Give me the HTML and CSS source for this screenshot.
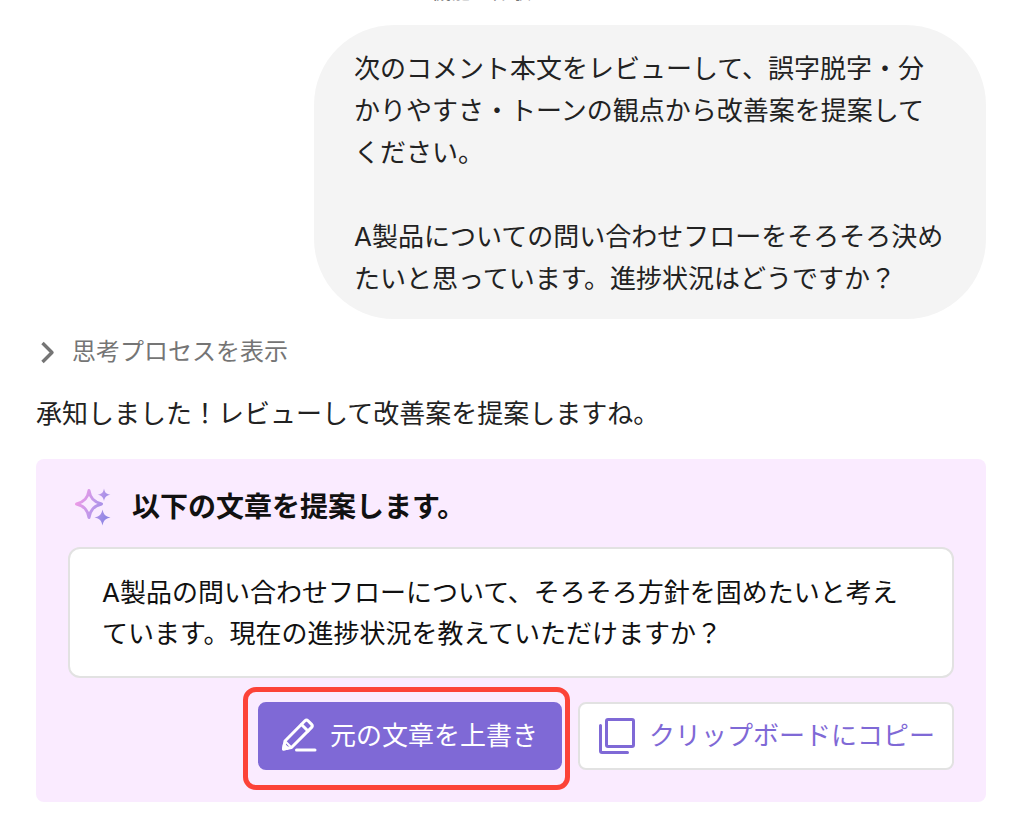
FILE: index.html
```html
<!DOCTYPE html>
<html lang="ja">
<head>
<meta charset="utf-8">
<meta name="viewport" content="width=device-width, initial-scale=1">
<title>レビュー</title>
<link rel="stylesheet" href="styles.css">
</head>
<body>
<main class="chat">
  <p class="notice">し機能を体験できます</p>

  <section class="message message-user">
    <p>次のコメント本文をレビューして、誤字脱字・分かりやすさ・トーンの観点から改善案を提案してください。</p>
    <p>A製品についての問い合わせフローをそろそろ決めたいと思っています。進捗状況はどうですか？</p>
  </section>

  <button class="thinking" type="button" aria-expanded="false">
    <svg class="thinking-icon" viewBox="0 0 24 24" aria-hidden="true"><path d="M6.500 3l9.500 9.500-9.500 9.500" fill="none" stroke="currentColor" stroke-width="3.400" stroke-linejoin="round"/></svg>
    思考プロセスを表示
  </button>

  <p class="reply">承知しました！レビューして改善案を提案しますね。</p>

  <section class="proposal">
    <h2 class="proposal-title">
      <svg class="sparkle" viewBox="0 0 40 40" aria-hidden="true">
        <defs>
          <linearGradient id="sparkle-fill" gradientUnits="userSpaceOnUse" x1="2" y1="14" x2="36" y2="28">
            <stop offset="0" stop-color="#f39be6"/>
            <stop offset=".55" stop-color="#bd98ea"/>
            <stop offset="1" stop-color="#8f86e4"/>
          </linearGradient>
        </defs>
        <path fill="none" stroke="url(#sparkle-fill)" stroke-width="3" stroke-linejoin="round" d="M17 3.500c1.200 7.600 4.600 11.500 12.500 13.500-7.900 2-11.300 5.900-12.500 13.500-1.200-7.600-4.600-11.500-12.500-13.500 7.900-2 11.300-5.900 12.500-13.500z"/>
        <path fill="url(#sparkle-fill)" d="M32 1.500c.9 4.300 2.200 5.400 6.500 6.300-4.300.9-5.600 2-6.500 6.300-.9-4.300-2.200-5.400-6.500-6.300 4.300-.9 5.600-2 6.500-6.300z"/>
        <path fill="url(#sparkle-fill)" d="M30.500 22.500c1.200 5.300 2.700 6.800 8 8-5.300 1.200-6.800 2.700-8 8-1.200-5.300-2.700-6.800-8-8 5.300-1.200 6.800-2.700 8-8z"/>
      </svg>
      以下の文章を提案します。
    </h2>
    <p class="proposal-text">A製品の問い合わせフローについて、そろそろ方針を固めたいと考えています。現在の進捗状況を教えていただけますか？</p>
    <div class="actions">
      <div class="highlighted">
        <button class="button button-primary" type="button">
          <svg class="button-icon" viewBox="0 0 40 40" fill="none" stroke="currentColor" stroke-width="3" stroke-linecap="round" stroke-linejoin="round" aria-hidden="true">
            <path d="M5.500 33l1.500-8L27 4.800q1.500-1.500 3 0l3.600 3.600q1.500 1.500 0 3L13.500 31.500z"/>
            <path d="M23.500 8.500l6.500 6.500"/>
            <path d="M7.500 25.500l5.500 5.500" stroke-width="2"/>
            <path d="M18.500 34h18.500"/>
            <path d="M5.500 33l.7-4 3.300 3.300z" fill="currentColor"/>
          </svg>
          元の文章を上書き
        </button>
      </div>
      <button class="button button-secondary" type="button">
        <svg class="button-icon" viewBox="0 0 40 40" fill="none" stroke="currentColor" stroke-width="3" stroke-linecap="round" stroke-linejoin="round" aria-hidden="true">
          <rect x="9.500" y="3.500" width="27" height="27" rx="1.500"/>
          <path d="M3.500 9.500V35q0 1.500 1.500 1.500h25.500"/>
        </svg>
        クリップボードにコピー
      </button>
    </div>
  </section>
</main>
</body>
</html>
```
FILE: styles.css
```css
* { box-sizing: border-box; }

body {
  margin: 0;
  background: #fff;
  color: #222;
  font: 26px/42px Inter, "Noto Sans CJK JP", sans-serif;
}

p, h2 { margin: 0; }

button { font: inherit; cursor: pointer; }

.chat {
  display: flex;
  flex-direction: column;
  align-items: flex-start;
  padding: 0 30px 36px 36px;
}

/* Last line of the notice, scrolled almost out of view */
.notice {
  align-self: center;
  margin: -20px 0 21px;
  color: #757575;
  font-size: 20px;
  line-height: 24px;
}

.message-user {
  display: flex;
  flex-direction: column;
  gap: 42px;
  align-self: flex-end;
  max-width: 672px;
  padding: 23px 40px 19px;
  border-radius: 80px;
  background: #f4f4f4;
}

.thinking {
  display: flex;
  align-items: center;
  gap: 12px;
  margin-top: 12px;
  padding: 0;
  border: 0;
  background: none;
  color: #757575;
  font-size: 24px;
}

.thinking-icon { width: 24px; height: 24px; }

.reply { margin-top: 20px; }

.proposal {
  align-self: stretch;
  margin-top: 24px;
  padding: 28px 32px 32px;
  border-radius: 8px;
  background: #faebff;
}

.proposal-title {
  display: flex;
  align-items: center;
  gap: 20px;
  padding-left: 4px;
  color: #111;
  font-size: 28px;
  line-height: 40px;
  font-weight: 700;
}

.sparkle { width: 40px; height: 40px; }

.proposal-text {
  margin-top: 20px;
  padding: 23px 32px 22px;
  border: 2px solid #e2e2e2;
  border-radius: 12px;
  background: #fff;
  color: #111;
  line-height: 41px;
}

.actions {
  display: flex;
  justify-content: flex-end;
  gap: 16px;
  margin-top: 24px;
}

.highlighted { position: relative; }

.highlighted::after {
  content: "";
  position: absolute;
  inset: -15px -8px -20px -15px;
  border: 5px solid #fc4338;
  border-radius: 13px;
  pointer-events: none;
}

.button {
  display: flex;
  align-items: center;
  gap: 12px;
  height: 68px;
  padding: 0 17px;
  border: 2px solid #e2e2e2;
  border-radius: 8px;
  background: #fff;
  color: #7f69d6;
}

.button-primary {
  padding: 0 22px 0 18px;
  border-color: #7f69d6;
  background: #7f69d6;
  color: #fff;
}

.button-icon { width: 40px; height: 40px; }
```
